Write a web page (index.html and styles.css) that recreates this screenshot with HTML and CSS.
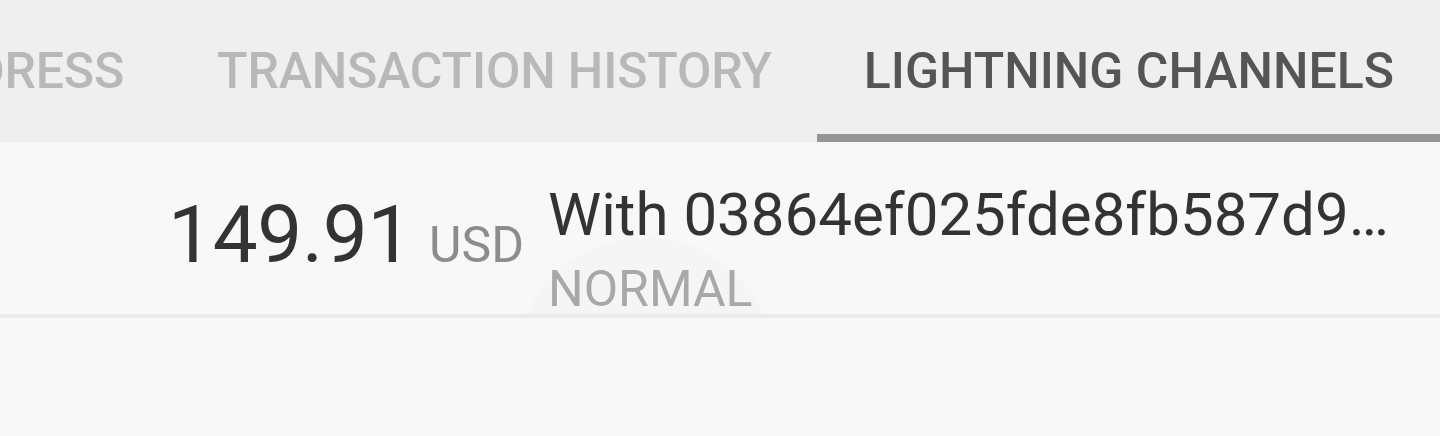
FILE: index.html
```html
<!DOCTYPE html>
<html>
<head>
<meta charset="utf-8">
<link rel="stylesheet" href="styles.css">
</head>
<body>
<div class="tabbar">
  <div class="tabs">
    <div class="tab tab-first">ADDRESS</div>
    <div class="tab tab-mid">TRANSACTION HISTORY</div>
    <div class="tab active">LIGHTNING CHANNELS</div>
  </div>
</div>
<div class="list">
  <div class="row">
    <div class="amount"><span class="value">149.91</span><span class="unit">USD</span></div>
    <div class="info">
      <div class="title">With 03864ef025fde8fb587d9b3f1a2c6e7d04</div>
      <div class="status">NORMAL</div>
    </div>
    <div class="ripple"></div>
  </div>
</div>
</body>
</html>
```

FILE: styles.css
```css
html, body {
  margin: 0;
  padding: 0;
  background: #f8f8f8;
  font-family: Roboto, "Noto Sans", sans-serif;
  overflow: hidden;
}
.tabbar {
  background: #efefef;
  height: 142px;
  overflow: hidden;
}
.tabs {
  display: flex;
  justify-content: flex-end;
  height: 100%;
}
.tab {
  flex: none;
  box-sizing: border-box;
  height: 142px;
  padding: 8px 45px 0 48px;
  display: flex;
  align-items: center;
  font-size: 50px;
  font-weight: 500;
  letter-spacing: -0.15px;
  color: #b8b8b8;
  white-space: nowrap;
  border-bottom: 8px solid transparent;
}
.tab-first {
  padding-right: 45px;
}
.tab-mid {
  padding-right: 45px;
}
.tab.active {
  color: #555555;
  border-bottom-color: #959595;
  padding-left: 47px;
  padding-right: 46px;
  letter-spacing: 0;
}
.list {
  background: #f8f8f8;
}
.row {
  position: relative;
  display: flex;
  align-items: flex-start;
  height: 176px;
  box-sizing: border-box;
  border-bottom: 4px solid #ebebeb;
  overflow: hidden;
}
.amount {
  width: 524px;
  flex: none;
  display: flex;
  justify-content: flex-end;
  align-items: baseline;
  padding-top: 43px;
  box-sizing: border-box;
  white-space: nowrap;
}
.value {
  font-size: 80px;
  letter-spacing: -0.3px;
  color: #333333;
  line-height: 100px;
}
.unit {
  font-size: 50px;
  color: #8c8c8c;
  margin-left: 17px;
}
.info {
  margin-left: 24px;
  width: 844px;
  flex: none;
  padding-top: 37px;
}
.title {
  font-size: 60px;
  color: #333333;
  line-height: 72px;
  white-space: nowrap;
  overflow: hidden;
  text-overflow: ellipsis;
}
.status {
  font-size: 50px;
  color: #ababab;
  line-height: 60px;
  margin-top: 8px;
}
.ripple {
  position: absolute;
  left: 515px;
  top: 95px;
  width: 260px;
  height: 260px;
  border-radius: 50%;
  background: rgba(0,0,0,0.012);
  pointer-events: none;
}
```
